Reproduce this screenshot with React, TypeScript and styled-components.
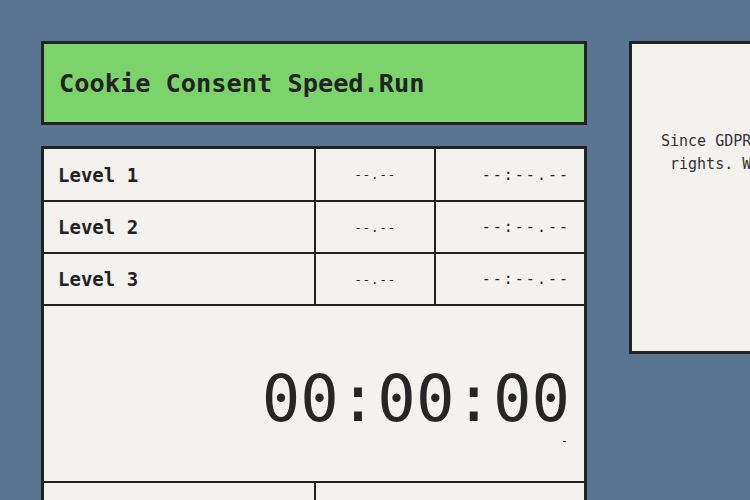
import React from "react";
import styled, { createGlobalStyle } from "styled-components";

const GlobalStyle = createGlobalStyle`
  html, body {
    margin: 0;
    padding: 0;
    background-color: #5a7591;
    overflow: hidden;
  }
  body {
    font-family: "DejaVu Sans Mono", "Liberation Mono", monospace;
    color: #222;
  }
`;

// --- Layout general ---
const Page = styled.div`
  display: flex;
  align-items: flex-start;
  gap: 42px;
  padding: 41px;
  width: 1200px;
`;

const LeftColumn = styled.div`
  display: flex;
  flex-direction: column;
  gap: 21px;
  width: 546px;
  flex-shrink: 0;
`;

const TitleBox = styled.header`
  box-sizing: border-box;
  height: 84px;
  background-color: #7dd36b;
  border: 3px solid #222;
  display: flex;
  align-items: center;
  padding-left: 15px;

  h1 {
    margin: 0;
    font-size: 25.3px;
    font-weight: 700;
  }
`;

// --- Tabla de splits ---
const Splits = styled.div`
  display: grid;
  grid-template-columns: 270px 118px 1fr;
  grid-template-rows: 51px 50px 50px 175px 50px;
  gap: 2px;
  background-color: #222;
  border: 3px solid #222;
`;

const Cell = styled.div<{ $align?: "left" | "center" | "right" }>`
  background-color: #f3f2ee;
  display: flex;
  align-items: center;
  justify-content: ${(p) =>
    p.$align === "right" ? "flex-end" : p.$align === "center" ? "center" : "flex-start"};
  padding: 0 14px;
`;

const LevelName = styled.span`
  font-size: 19px;
  font-weight: 700;
`;

const SegmentTime = styled.span`
  font-size: 13px;
  letter-spacing: 0.5px;
`;

const TotalTime = styled.span`
  font-size: 15px;
  letter-spacing: 2px;
`;

const TimerCell = styled.div`
  grid-column: 1 / -1;
  background-color: #f3f2ee;
  display: flex;
  flex-direction: column;
  align-items: flex-end;
  justify-content: center;
  padding: 26px 14px 0;
`;

const BigClock = styled.div`
  font-size: 64px;
  line-height: 1;
  color: #262626;
`;

const SubClock = styled.div`
  font-size: 12px;
  line-height: 12px;
  margin-top: 4px;
  margin-right: 2px;
`;

const FooterCell = styled.div<{ $span?: string }>`
  background-color: #f3f2ee;
  grid-column: ${(p) => p.$span || "auto"};
`;

// --- Panel derecho ---
const InfoPanel = styled.aside`
  box-sizing: border-box;
  width: 371px;
  height: 313px;
  flex-shrink: 0;
  background-color: #f3f2ee;
  border: 3px solid #222;
  padding-top: 86px;
  text-align: center;

  p {
    margin: 0;
    font-size: 15px;
    line-height: 23px;
    color: #333;
  }
`;

const levels = ["Level 1", "Level 2", "Level 3"];

const App = () => {
  return (
    <>
      <GlobalStyle />
      <Page>
        <LeftColumn>
          <TitleBox>
            <h1>Cookie Consent Speed.Run</h1>
          </TitleBox>
          <Splits>
            {levels.map((name) => (
              <React.Fragment key={name}>
                <Cell>
                  <LevelName>{name}</LevelName>
                </Cell>
                <Cell $align="center">
                  <SegmentTime>--.--</SegmentTime>
                </Cell>
                <Cell $align="right">
                  <TotalTime>--:--.--</TotalTime>
                </Cell>
              </React.Fragment>
            ))}
            <TimerCell>
              <BigClock>00:00:00</BigClock>
              <SubClock>-</SubClock>
            </TimerCell>
            <FooterCell />
            <FooterCell $span="2 / -1" />
          </Splits>
        </LeftColumn>
        <InfoPanel>
          <p>
            Since GDPR, you've got lots of new
            <br />
            rights. We all love clicking the
          </p>
        </InfoPanel>
      </Page>
    </>
  );
};

export default App;
